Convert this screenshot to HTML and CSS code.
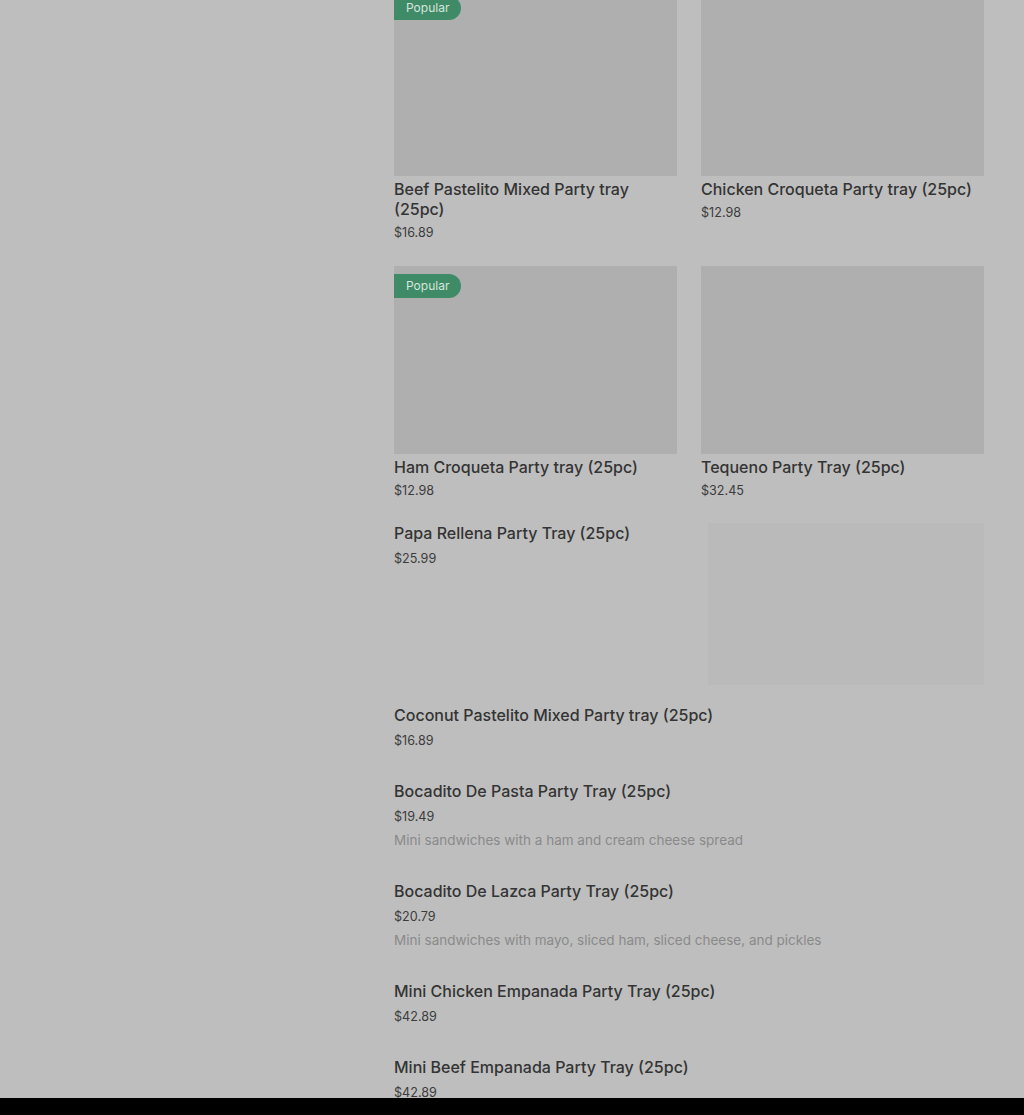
FILE: index.html
```html
<!DOCTYPE html>
<html lang="en">
<head>
<meta charset="utf-8">
<title>Party Trays</title>
<link rel="stylesheet" href="styles.css">
</head>
<body>
<div class="page">
  <aside class="side"></aside>
  <main class="menu">
    <div class="grid">
      <div class="card">
        <div class="thumb"><span class="badge">Popular</span></div>
        <div class="title">Beef Pastelito Mixed Party tray (25pc)</div>
        <div class="price">$16.89</div>
      </div>
      <div class="card">
        <div class="thumb"></div>
        <div class="title">Chicken Croqueta Party tray (25pc)</div>
        <div class="price">$12.98</div>
      </div>
      <div class="card">
        <div class="thumb"><span class="badge">Popular</span></div>
        <div class="title">Ham Croqueta Party tray (25pc)</div>
        <div class="price">$12.98</div>
      </div>
      <div class="card">
        <div class="thumb"></div>
        <div class="title">Tequeno Party Tray (25pc)</div>
        <div class="price">$32.45</div>
      </div>
    </div>
    <div class="list">
      <div class="item item-media">
        <div class="item-text">
          <div class="title">Papa Rellena Party Tray (25pc)</div>
          <div class="price price-list">$25.99</div>
        </div>
        <div class="ghost"></div>
      </div>
      <div class="item">
        <div class="title">Coconut Pastelito Mixed Party tray (25pc)</div>
        <div class="price price-list">$16.89</div>
      </div>
      <div class="item">
        <div class="title">Bocadito De Pasta Party Tray (25pc)</div>
        <div class="price price-list">$19.49</div>
        <div class="desc">Mini sandwiches with a ham and cream cheese spread</div>
      </div>
      <div class="item">
        <div class="title">Bocadito De Lazca Party Tray (25pc)</div>
        <div class="price price-list">$20.79</div>
        <div class="desc">Mini sandwiches with mayo, sliced ham, sliced cheese, and pickles</div>
      </div>
      <div class="item">
        <div class="title">Mini Chicken Empanada Party Tray (25pc)</div>
        <div class="price price-list">$42.89</div>
      </div>
      <div class="item">
        <div class="title">Mini Beef Empanada Party Tray (25pc)</div>
        <div class="price price-list">$42.89</div>
      </div>
    </div>
  </main>
</div>
<div class="bottom-bar"></div>
</body>
</html>
```

FILE: styles.css
```css
* { box-sizing: border-box; }
html, body {
  margin: 0;
  padding: 0;
  height: 100%;
  overflow: hidden;
}
body {
  background: #bebebe;
  font-family: Inter, "Liberation Sans", sans-serif;
  color: #333333;
}
.page {
  display: flex;
  margin-top: -12px;
}
.side {
  width: 394px;
  flex: none;
}
.menu {
  width: 590px;
  flex: none;
}
.grid {
  display: grid;
  grid-template-columns: 283px 283px;
  column-gap: 24px;
  row-gap: 24px;
}
.thumb {
  position: relative;
  height: 188px;
  background: #afafaf;
}
.badge {
  position: absolute;
  left: 0;
  top: 8px;
  height: 24px;
  line-height: 24px;
  padding: 0 12px;
  background: #3f8b68;
  color: #d6e6dc;
  font-size: 12px;
  border-radius: 0 12px 12px 0;
}
.title {
  margin-top: 3px;
  font-size: 16px;
  line-height: 20px;
  font-weight: 500;
  color: #343434;
}
.price {
  margin-top: 5px;
  font-size: 12.6px;
  line-height: 18px;
  color: #3c3c3c;
}
.price-list { margin-top: 7px; }
.list {
  margin-top: 23px;
}
.item {
  padding-bottom: 31px;
}
.item .title { margin-top: 0; }
.item-media {
  display: flex;
  justify-content: space-between;
  padding-bottom: 20px;
}
.ghost {
  width: 276px;
  height: 162px;
  background: #bababa;
}
.desc {
  margin-top: 4px;
  font-size: 13.5px;
  line-height: 20px;
  color: #8a8a8a;
}
.bottom-bar {
  position: fixed;
  left: 0;
  right: 0;
  bottom: 0;
  height: 17px;
  background: #000;
}
```
